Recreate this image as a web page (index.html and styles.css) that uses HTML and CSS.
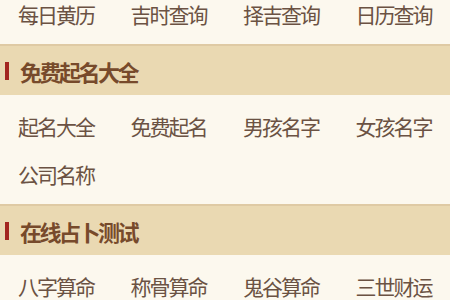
FILE: index.html
```html
<!DOCTYPE html>
<html lang="zh-CN">
<head>
<meta charset="utf-8">
<link rel="stylesheet" href="styles.css">
</head>
<body>
<div class="page">
  <ul class="links">
    <li>每日黄历</li><li>吉时查询</li><li>择吉查询</li><li>日历查询</li>
  </ul>
  <h2 class="section-title">免费起名大全</h2>
  <ul class="links">
    <li>起名大全</li><li>免费起名</li><li>男孩名字</li><li>女孩名字</li>
    <li>公司名称</li>
  </ul>
  <h2 class="section-title">在线占卜测试</h2>
  <ul class="links">
    <li>八字算命</li><li>称骨算命</li><li>鬼谷算命</li><li>三世财运</li>
  </ul>
</div>
</body>
</html>
```

FILE: styles.css
```css
html, body {
  margin: 0;
  padding: 0;
  background: #fcf8ee;
  overflow: hidden;
}
body {
  font-family: "Noto Sans CJK SC", "Noto Sans", sans-serif;
}
.page {
  margin-top: -17px;
}
.links {
  list-style: none;
  margin: 0;
  padding: 8px 0 5px;
  display: grid;
  grid-template-columns: repeat(4, 1fr);
}
.links li {
  height: 48px;
  line-height: 46px;
  padding-left: 18px;
  font-size: 21px;
  letter-spacing: -2px;
  color: #6b5243;
  white-space: nowrap;
}
.section-title {
  margin: 0;
  height: 49px;
  border-top: 2px solid #dfcaa4;
  background: #ead9b2;
  display: flex;
  align-items: center;
  gap: 11px;
  padding-left: 5px;
  font-size: 22px;
  letter-spacing: -2.5px;
  font-weight: bold;
  color: #774a2b;
}
.section-title::before {
  content: "";
  width: 4px;
  height: 18px;
  background: #a3261f;
}
```
